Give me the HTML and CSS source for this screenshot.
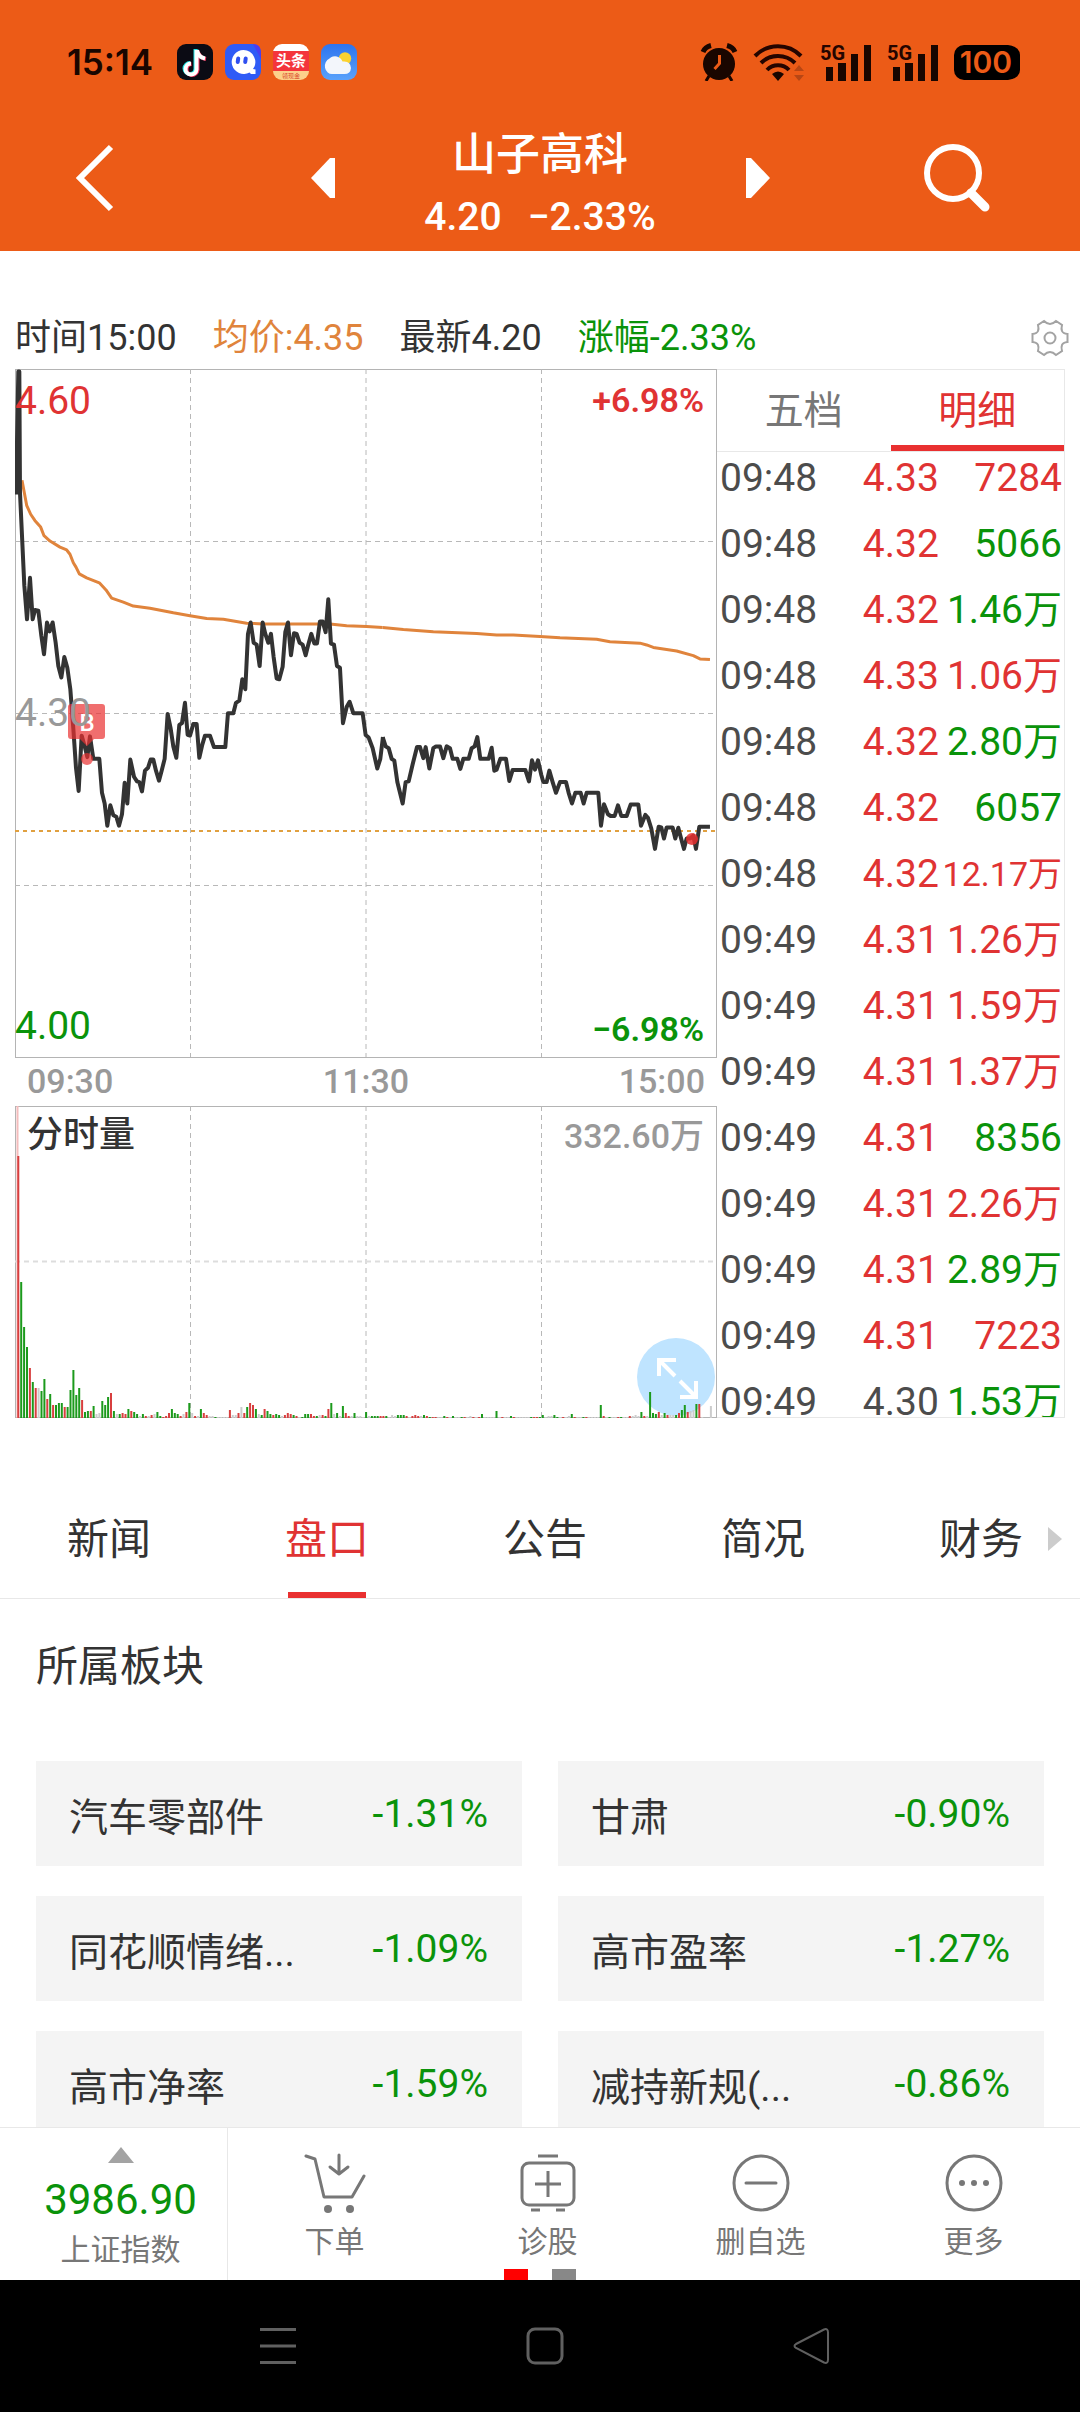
FILE: index.html
```html
<!DOCTYPE html>
<html lang="zh-CN">
<head>
<meta charset="utf-8">
<meta name="viewport" content="width=device-width, initial-scale=1">
<title>山子高科 4.20 -2.33%</title>
<link rel="stylesheet" href="styles.css">
</head>
<body>
<header class="header">
  <div class="status">
    <span class="clock">15:14</span>
    <div class="apps">
      <svg width="36" height="36" viewBox="0 0 36 36"><rect width="36" height="36" rx="9" fill="#0b0b14"/><g fill="none" stroke-width="4"><path d="M18.500 5v20a5.500 5.500 0 1 1-5.500-6M19 6q1 7 8 8" stroke="#25e6e6"/><path d="M20.500 7v19a5.500 5.500 0 1 1-6-6M20.500 7q2 7 8.500 8" stroke="#f3325c"/><path d="M19.500 6v19.500a5.500 5.500 0 1 1-5.500-6M20 6q1 7 8 8.500" stroke="#fff"/></g></svg>
      <svg width="36" height="36" viewBox="0 0 36 36"><rect width="36" height="36" rx="9" fill="#2f5bf6"/><path d="M36 15 28 0q8 0 8 9z" fill="#4b3df0"/><path d="M18.500 6a12 12 0 1 0 6 22.500l1.500 1.500h4.500v-4.500l-2.500-.5a12 12 0 0 0-9.500-19z" fill="#fff"/><rect x="11" y="12.500" width="4" height="7.500" rx="2" fill="#2f4ff0" transform="rotate(8 13 16)"/><rect x="18.500" y="12.500" width="4" height="7.500" rx="2" fill="#2f4ff0" transform="rotate(8 20 16)"/></svg>
      <span class="toutiao"><b>头条</b><i>领现金</i></span>
      <svg width="36" height="36" viewBox="0 0 36 36"><defs><linearGradient id="sky" x2="0" y2="1"><stop stop-color="#2d74ee"/><stop offset="1" stop-color="#5aa2fb"/></linearGradient></defs><rect width="36" height="36" rx="9" fill="url(#sky)"/><circle cx="24" cy="14.500" r="6.200" fill="#fbd22f"/><path d="M11.500 30a7 8 0 0 1-3-15.500 8 8 0 0 1 13 3q8-1 8.500 6.500-.5 6-6.500 6z" fill="#f3f6fb"/></svg>
    </div>
    <div class="signals">
      <svg width="38" height="38" viewBox="0 0 38 38"><circle cx="19" cy="21" r="16" fill="#190600"/><g fill="none" stroke="#190600"><path d="M3 9q2-5 8-6.500M35 9q-2-5-8-6.500" stroke-width="5"/><path d="m9 33-3 5M29 33l3 5" stroke-width="3"/></g><path d="M19.500 12v8.500l-5 5.500" fill="none" stroke="#ec5b17" stroke-width="3"/></svg>
      <svg width="52" height="38" viewBox="0 0 52 38"><g fill="none" stroke="#240500" stroke-width="4"><path d="M2 13a32 32 0 0 1 46 0"/><path d="M8 20a24 24 0 0 1 34 0"/><path d="M14 27a15 15 0 0 1 22 0"/></g><path d="M19 31q6-5 12 0l-6 7z" fill="#190600"/><path d="m46 22 5 6H41zM46 38l5-6H41z" fill="#b84614"/></svg>
      <svg width="52" height="38" viewBox="0 0 52 38"><text x="0" y="17" class="net">5G</text><path d="M6 24h7v14H6zM18 20h8v18h-8zM31 11h7v27h-7zM44 2h7v36h-7z" fill="#190600"/></svg>
      <svg width="52" height="38" viewBox="0 0 52 38"><text x="0" y="17" class="net">5G</text><path d="M6 24h7v14H6zM18 20h8v18h-8zM31 11h7v27h-7zM44 2h7v36h-7z" fill="#190600"/></svg>
      <span class="battery">100</span>
    </div>
  </div>
  <div class="titlebar">
    <button class="icon-btn back" aria-label="返回"><svg width="40" height="68" viewBox="0 0 40 68"><path d="M36 3 5 34l31 31" fill="none" stroke="#fff" stroke-width="6"/></svg></button>
    <div class="switcher">
      <button class="icon-btn" aria-label="上一只"><svg width="24" height="40" viewBox="0 0 24 40"><path d="M24 0v40h-5L0 20 19 0z" fill="#fff"/></svg></button>
      <div class="stock">
        <h1>山子高科</h1>
        <p><span>4.20</span><span>−2.33%</span></p>
      </div>
      <button class="icon-btn" aria-label="下一只"><svg width="24" height="40" viewBox="0 0 24 40"><path d="M0 0v40h5l19-20L5 0z" fill="#fff"/></svg></button>
    </div>
    <button class="icon-btn search" aria-label="搜索"><svg width="66" height="68" viewBox="0 0 66 68"><circle cx="29" cy="29" r="26" fill="none" stroke="#fff" stroke-width="6"/><path d="m47 49 14 14" stroke="#fff" stroke-width="9" stroke-linecap="round"/></svg></button>
  </div>
</header>

<main class="content">
  <div class="quote">
    <span>时间15:00</span><span class="avg">均价:4.35</span><span>最新4.20</span><span class="down">涨幅-2.33%</span>
    <button class="icon-btn gear" aria-label="设置"><svg width="38" height="38" viewBox="-1 -1 38 38"><path d="M35.500 14v8q-4.500.500-5.500 3-1 2 0 6l-6 4q-3-3-6-3t-6 3l-6-4q1-4 0-6-1-2.500-5.500-3v-8q4.500-.500 5.500-3 1-2 0-6l6-4q3 3 6 3t6-3l6 4q-1 4 0 6 1 2.500 5.500 3z" fill="none" stroke="#a3a3a3" stroke-width="2"/><circle cx="18" cy="18" r="5.500" fill="none" stroke="#a3a3a3" stroke-width="2"/></svg></button>
  </div>

  <div class="board">
    <div class="charts">
      <div class="chart">
        <svg class="plot" viewBox="0 0 702 688">
          <rect x=".5" y=".5" width="701" height="688" fill="none" stroke="#b4b4b4"/>
          <g fill="none" stroke="#b8b8b8" stroke-dasharray="5 4"><path d="M175.500 0v688M351 0v688M526.500 0v688M0 172.500h702M0 344.500h702M0 516.500h702"/></g>
          <path d="M0 462h702" stroke="#e0a040" stroke-width="2" stroke-dasharray="4 4"/>
          <g fill="none" stroke-linejoin="round">
            <g stroke="#e0843c" stroke-width="3">
              <polyline vector-effect="non-scaling-stroke" transform="translate(-15 -69) scale(.3333 .3571)" points="66,505 73,540 80,575 92,600 105,618 122,636 132,660 150,675 180,692 200,700 210,712 220,736 228,748 238,767 260,778 298,792 318,812 335,835 370,846 400,857 450,863 520,876 570,884 620,892 670,894 740,905 790,907 990,907 1040,912 1100,914 1148,917"/>
              <polyline vector-effect="non-scaling-stroke" transform="translate(365 -69) scale(.3333 .3571)" points="8,917 70,923 160,929 290,934 350,938 400,938 480,942 540,946 650,950 690,957 780,961 800,966 820,973 890,983 940,996 960,1005 990,1007"/>
            </g>
            <g stroke="#333" stroke-width="4">
              <polyline vector-effect="non-scaling-stroke" transform="translate(-15 -69) scale(.3333 .3571)" points="51,545 51,400 55,200 58,200 60,540 65,640 73,800 81,894 90,778 98,894 105,868 115,870 124,940 132,992 141,903 149,928 158,903 167,960 175,1025 184,1057 193,1000 202,1030 211,1090 220,1200 228,1310 236,1375 245,1220 254,1250 262,1280 270,1222 280,1285 298,1285 306,1380 314,1410 322,1472 331,1415 340,1443 349,1447 357,1472 366,1440 374,1352 382,1410 391,1287 402,1335 411,1348 418,1350 426,1376 435,1318 444,1310 452,1287 460,1287 468,1318 477,1346 485,1318 494,1285 503,1159 512,1200 520,1250 529,1282 538,1190 546,1185 555,1128 563,1218 570,1220 580,1187 590,1187 598,1282 607,1245 615,1220 630,1220 642,1252 676,1252 684,1157 700,1157 708,1128 718,1122 727,1062 736,1090 744,935 752,903 761,960 770,965 779,1025 788,903 796,935 805,960 813,935 821,1000 830,1060 838,1062 848,1027 856,930 864,903 873,995 882,933 890,935 899,960 908,965 917,995 925,965 934,935 943,962 951,962 960,900 968,900 977,930 985,838 993,962 1002,965 1011,1025 1020,1030 1029,1185 1040,1140 1049,1125 1060,1157 1088,1157 1097,1218 1106,1225 1118,1255 1132,1312 1141,1285 1149,1224"/>
              <polyline vector-effect="non-scaling-stroke" transform="translate(365 -69) scale(.3333 .3571)" points="8,1224 17,1250 26,1255 35,1285 43,1290 52,1350 60,1380 68,1410 77,1350 86,1348 98,1300 111,1252 120,1252 130,1283 137,1252 148,1312 160,1255 168,1250 180,1250 190,1283 200,1250 210,1255 218,1285 232,1285 241,1313 250,1285 266,1285 275,1255 284,1250 292,1224 301,1285 326,1285 335,1254 343,1318 350,1315 361,1285 378,1285 388,1347 398,1316 436,1316 447,1348 456,1289 465,1315 474,1289 484,1330 490,1350 500,1350 508,1318 518,1350 528,1380 540,1350 558,1350 566,1380 576,1410 586,1380 602,1380 611,1410 620,1380 655,1380 663,1472 672,1412 684,1440 692,1445 704,1445 714,1415 724,1445 740,1445 752,1413 775,1413 783,1472 796,1442 804,1450 814,1480 825,1537 836,1475 844,1477 852,1508 860,1477 878,1477 886,1508 895,1478 904,1510 912,1537 920,1508 930,1508 940,1500 948,1537 958,1475 990,1475"/>
            </g>
          </g>
          <g fill="#e93030" fill-opacity=".7"><path d="M56 335h31q3 0 3 3v29q0 3-3 3h-8l-7 7-7-7h-9q-3 0-3-3v-29q0-3 3-3z"/><circle cx="72" cy="390" r="6"/><circle cx="677" cy="470" r="6" fill-opacity=".85"/></g>
          <text x="72" y="362" class="buy">B</text>
        </svg>
        <span class="label top-left up">4.60</span>
        <span class="label mid-left">4.30</span>
        <span class="label bottom-left down">4.00</span>
        <span class="label pct top-right up">+6.98%</span>
        <span class="label pct bottom-right down">−6.98%</span>
      </div>
      <div class="axis"><span>09:30</span><span>11:30</span><span>15:00</span></div>
      <div class="chart volume">
        <button class="icon-btn expand" aria-label="全屏"><svg width="78" height="78" viewBox="0 0 78 78"><g fill="none" stroke="#fff" stroke-width="4"><path d="M22 38V22h17M22 22l16 16M43 59h16V43M59 59 43 43"/></g></svg></button>
        <svg class="plot" viewBox="0 0 702 312">
          <rect x=".5" y=".5" width="701" height="311" fill="none" stroke="#b4b4b4"/>
          <g fill="none" stroke="#b8b8b8" stroke-dasharray="5 4"><path d="M175.500 0v312M351 0v312M526.500 0v312"/><path d="M0 155.500h702" stroke="#ddd" stroke-width="2"/></g>
          <path d="M2.500 0v312" stroke="#f4bcbc" stroke-width="2"/>
          <path id="bars-n" stroke="#ccc"/><path id="bars-r" stroke="#d83f3f"/><path id="bars-g" stroke="#1c9a1c"/>
        </svg>
        <span class="label vol-name">分时量</span>
        <span class="label vol-max">332.60万</span>
      </div>
    </div>

    <section class="ticks">
      <div class="tick-tabs"><button>五档</button><button class="active">明细</button></div>
      <div class="tick-list">
        <table>
          <tr><td>09:48</td><td class="up">4.33</td><td class="up">7284</td></tr>
          <tr><td>09:48</td><td class="up">4.32</td><td class="down">5066</td></tr>
          <tr><td>09:48</td><td class="up">4.32</td><td class="down">1.46万</td></tr>
          <tr><td>09:48</td><td class="up">4.33</td><td class="up">1.06万</td></tr>
          <tr><td>09:48</td><td class="up">4.32</td><td class="down">2.80万</td></tr>
          <tr><td>09:48</td><td class="up">4.32</td><td class="down">6057</td></tr>
          <tr><td>09:48</td><td class="up">4.32</td><td class="up long">12.17万</td></tr>
          <tr><td>09:49</td><td class="up">4.31</td><td class="up">1.26万</td></tr>
          <tr><td>09:49</td><td class="up">4.31</td><td class="up">1.59万</td></tr>
          <tr><td>09:49</td><td class="up">4.31</td><td class="up">1.37万</td></tr>
          <tr><td>09:49</td><td class="up">4.31</td><td class="down">8356</td></tr>
          <tr><td>09:49</td><td class="up">4.31</td><td class="up">2.26万</td></tr>
          <tr><td>09:49</td><td class="up">4.31</td><td class="down">2.89万</td></tr>
          <tr><td>09:49</td><td class="up">4.31</td><td class="up">7223</td></tr>
          <tr><td>09:49</td><td>4.30</td><td class="down">1.53万</td></tr>
        </table>
      </div>
    </section>
  </div>

  <nav class="tabs">
    <button><span>新闻</span></button>
    <button class="active"><span>盘口</span></button>
    <button><span>公告</span></button>
    <button><span>简况</span></button>
    <button><span>财务</span></button>
    <svg class="more-arrow" width="14" height="24" viewBox="0 0 14 24"><path d="m0 0 14 12L0 24z" fill="#ccc"/></svg>
  </nav>

  <section class="sectors">
    <h2>所属板块</h2>
    <div class="sector-grid">
      <a href="#"><span>汽车零部件</span><span class="down">-1.31%</span></a>
      <a href="#"><span>甘肃</span><span class="down">-0.90%</span></a>
      <a href="#"><span>同花顺情绪...</span><span class="down">-1.09%</span></a>
      <a href="#"><span>高市盈率</span><span class="down">-1.27%</span></a>
      <a href="#"><span>高市净率</span><span class="down">-1.59%</span></a>
      <a href="#"><span>减持新规(...</span><span class="down">-0.86%</span></a>
    </div>
  </section>
</main>

<footer class="toolbar">
  <button class="index">
    <svg width="26" height="16" viewBox="0 0 26 16"><path d="m13 0 13 16H0z" fill="#a3a3a3"/></svg>
    <strong class="down">3986.90</strong>
    <span>上证指数</span>
  </button>
  <button class="action">
    <svg width="62" height="60" viewBox="0 0 62 60"><g fill="none" stroke="#777" stroke-width="3" stroke-linecap="round" stroke-linejoin="round"><path d="m2 3 9 3 9 38h28l12-21"/><path d="M35 2v19M26 14l9 7 9-7"/></g><circle cx="24" cy="56" r="4" fill="#777"/><circle cx="46" cy="56" r="4" fill="#777"/></svg>
    <span>下单</span>
  </button>
  <button class="action">
    <svg width="62" height="60" viewBox="0 0 62 60"><g fill="none" stroke="#777" stroke-width="3"><rect x="5" y="10" width="52" height="42" rx="7"/><path d="M21 3h20M14 57h9M39 57h9M31 18v26M18 31h26"/></g></svg>
    <span>诊股</span>
  </button>
  <button class="action">
    <svg width="62" height="60" viewBox="0 0 62 60"><circle cx="31" cy="30" r="27" fill="none" stroke="#777" stroke-width="3"/><path d="M16 30h30" stroke="#777" stroke-width="3" stroke-linecap="round"/></svg>
    <span>删自选</span>
  </button>
  <button class="action">
    <svg width="62" height="60" viewBox="0 0 62 60"><circle cx="31" cy="30" r="27" fill="none" stroke="#777" stroke-width="3"/><g fill="#777"><circle cx="19" cy="30" r="3"/><circle cx="31" cy="30" r="3"/><circle cx="43" cy="30" r="3"/></g></svg>
    <span>更多</span>
  </button>
  <div class="pager"><i class="on"></i><i></i></div>
</footer>

<nav class="sysnav">
  <button class="icon-btn" aria-label="任务"><svg width="38" height="38" viewBox="0 0 38 38"><path d="M1 2.500h36M1 19h36M1 35.500h36" stroke="#606060" stroke-width="3"/></svg></button>
  <button class="icon-btn" aria-label="主页"><svg width="38" height="38" viewBox="0 0 38 38"><rect x="2" y="2" width="34" height="34" rx="7" fill="none" stroke="#606060" stroke-width="3"/></svg></button>
  <button class="icon-btn" aria-label="后退"><svg width="38" height="38" viewBox="0 0 38 38"><path d="M3 17 31 2.500q4-1.500 4 3v27q0 4.500-4 3L3 21q-3-2 0-4z" fill="none" stroke="#606060" stroke-width="2"/></svg></button>
</nav>
<script src="chart.js"></script>
</body>
</html>
```
FILE: styles.css
```css
* { box-sizing: border-box; margin: 0; }
body {
  display: flex; flex-direction: column; height: 100vh; overflow: hidden;
  background: #fff; color: #333;
  font-family: Roboto, "Noto Sans CJK SC", sans-serif; font-size: 39px;
}
button { font: inherit; color: inherit; background: none; border: 0; padding: 0; }
svg { display: block; }
.icon-btn { display: block; }
.up { color: #e03333; }
.down { color: #0a930a; }

.header { background: #ec5b17; height: 251px; flex: none; }
.status { display: flex; align-items: center; height: 124px; padding: 0 62px 0 67px; color: #190600; }
.clock { font: 600 35px/36px Inter, sans-serif; width: 110px; white-space: nowrap; }
.apps { display: flex; gap: 12px; }
.toutiao {
  display: flex; flex-direction: column; align-items: center; justify-content: flex-end;
  width: 36px; height: 36px; border-radius: 9px; overflow: hidden;
  background: linear-gradient(#fff 7px, #f4353c 7px 27px, #fcd08a 27px); color: #fff; white-space: nowrap;
}
.toutiao b { font-size: 15px; line-height: 20px; }
.toutiao i { font: normal 6px/9px "Noto Sans CJK SC", sans-serif; color: #d8452b; }
.signals { display: flex; align-items: center; gap: 15px; margin-left: auto; }
.net { font: 700 20px Roboto, sans-serif; fill: #240500; }
.battery {
  width: 64px; height: 35px; border-radius: 10px; background: #000; color: #ec5b17;
  font: 600 30px/35px Inter, sans-serif; text-align: center;
  box-shadow: 3px 0 0 -1px #000;
}
.titlebar { display: grid; grid-template-columns: 1fr auto 1fr; align-items: center; height: 127px; color: #fff; }
.titlebar .icon-btn { padding-bottom: 20px; }
.back { justify-self: start; margin-left: 75px; }
.search { justify-self: end; margin-right: 90px; }
.switcher { display: flex; align-items: center; }
.stock { width: 411px; height: 127px; text-align: center; }
.stock h1 { font-size: 44px; line-height: 62px; font-weight: 500; }
.stock p { display: flex; justify-content: center; gap: 26px; font-size: 39px; line-height: 62px; font-weight: 500; }

.content { flex: 1; min-height: 0; overflow: hidden; }
.quote { display: flex; gap: 36px; align-items: center; height: 118px; padding: 56px 11px 0 15px; font-size: 36px; line-height: 60px; }
.quote .avg { color: #e0843c; }
.gear { margin-left: auto; }

.board { display: grid; grid-template-columns: 702fr 348fr; margin: 0 15px; }
.chart { position: relative; }
.plot { position: relative; width: 100%; height: auto; overflow: visible; }
.label { position: absolute; line-height: 40px; }
.top-left { left: 0; top: 12px; }
.mid-left { left: 0; top: 324px; color: #999; }
.bottom-left { left: 0; bottom: 11px; }
.pct { font-size: 34px; font-weight: 600; right: 13px; }
.top-right { top: 11px; }
.bottom-right { bottom: 8px; }
.buy { font: 500 24px Roboto, sans-serif; fill: #fff; text-anchor: middle; }
.axis { display: flex; justify-content: space-between; padding: 0 12px; color: #999; font-size: 34px; line-height: 49px; font-weight: 500; }
.vol-name { left: 12px; top: 9px; font-size: 36px; font-weight: 500; }
.vol-max { right: 13px; top: 10px; font-size: 34px; font-weight: 500; color: #999; }
.expand { position: absolute; right: 2px; bottom: 2px; border-radius: 50%; background: #bfe4ff; }

.ticks { display: flex; flex-direction: column; min-height: 0; border: 1px solid #e8e8e8; border-left: 0; color: #4c4c4c; contain: size; }
.tick-tabs { display: flex; flex: none; border-bottom: 1px solid #e8e8e8; }
.tick-tabs button { flex: 1; height: 81px; line-height: 75px; padding-top: 4px; border-bottom: 6px solid transparent; color: #777; }
.tick-tabs .active { color: #e03333; border-color: #e93030; }
.tick-list { flex: 1; min-height: 0; overflow: hidden; padding: 0 2px 0 3px; }
table { width: 100%; border-collapse: collapse; table-layout: fixed; }
td { height: 66px; padding: 0 0 14px; line-height: 52px; text-align: right; vertical-align: top; white-space: nowrap; }
td:first-child { text-align: left; width: 28%; }
td:nth-child(2) { width: 36%; }
.long { font-size: 34px; }

.tabs { position: relative; display: flex; overflow: hidden; margin-top: 63px; border-bottom: 1px solid #e8e8e8; font-size: 42px; }
.tabs button { flex: 1 0 218px; display: flex; justify-content: center; }
.tabs button span { height: 117px; line-height: 117px; }
.tabs .active { color: #e03333; }
.tabs .active span { background: linear-gradient(#e93030, #e93030) center bottom / 78px 6px no-repeat; }
.more-arrow { position: absolute; right: 18px; top: 46px; }

.sectors { padding: 38px 36px 0; }
h2 { font-size: 42px; line-height: 60px; font-weight: 400; }
.sector-grid { display: grid; grid-template-columns: 1fr 1fr; gap: 30px 36px; margin-top: 64px; }
.sector-grid a {
  display: flex; justify-content: space-between; align-items: center; height: 105px; padding: 0 34px 0 33px;
  background: #f4f4f4; color: #333; text-decoration: none; white-space: nowrap;
}
.sector-grid .down { color: #0a930a; }

.toolbar { position: relative; display: flex; flex: none; height: 153px; border-top: 1px solid #e8e8e8; background: #fff; color: #777; font-size: 30px; line-height: 40px; }
.index { display: flex; flex-direction: column; align-items: center; width: 228px; padding: 19px 0 0 14px; border-right: 1px solid #e8e8e8; }
.index strong { font-size: 42px; line-height: 50px; font-weight: 400; margin: 12px 0 5px; }
.action { flex: 1; display: flex; flex-direction: column; align-items: center; padding-top: 25px; gap: 9px; }
.pager { position: absolute; bottom: 0; left: 0; right: 0; display: flex; justify-content: center; gap: 24px; }
.pager i { width: 24px; height: 11px; background: #888; }
.pager .on { background: #f00; }

.sysnav { display: flex; flex: none; justify-content: space-around; align-items: center; height: 132px; padding: 0 134px 0 144px; background: #000; }
```
FILE: chart.js
```js
// One entry per minute: direction (g down, r up, n flat) and bar height.
const volumes = `r262 g136 g91 g71 r50 g36 r30 n30 g27 g39 r19 g24 r13 g13 g15 g15 r11 g11 g28 g48
g23 g30 r18 g6 g7 r7 g12 n4 n5 g17 g13 g21 r25 g7 n4 g4 r5 r4 g9 r7
g6 g4 n2 g4 r2 n2 r3 n4 g6 g2 r1 r2 r5 g9 g5 g4 r2 n4 r6 g15
n5 r2 n2 g9 r5 r3 n2 n2 g1 n1 n1 n1 n1 r8 n3 n3 r5 n11 r5 g11
r15 r13 g9 n4 g3 r9 g7 g4 r3 g4 g3 n2 r3 r5 r4 g3 r2 n1 g1 g4
g4 r4 r2 g2 n3 r3 g2 r9 g15 n4 g5 n2 g12 r5 r2 n2 g5 n2 n2 n1
g6 n2 g2 g2 g2 r2 r2 g2 n1 n3 n2 g3 g3 g3 r2 n1 r2 r3 r2 n2
g3 r2 g1 r1 r1 n1 n1 g2 r1 n1 g2 n1 n1 g1 r1 n1 n2 r1 n1 r1
g4 n1 n1 n1 n1 g7 n1 r1 n1 n1 g2 r1 n1 n1 n1 n1 n1 g1 r1 r1
g1 g3 n1 n2 n2 g3 g1 n1 r1 n1 n2 g4 r1 n1 n1 g1 r1 n1 n1 n1
n1 g13 r2 n1 g1 n1 n1 r1 g1 n1 n1 r2 n2 n3 n2 g6 r2 n2 g26 g5
g4 r6 n3 g5 r3 n3 n3 g3 r5 g8 g13 r6 n7 n8 g14 r14 n1 n0 n0 n12`.split(/\s+/);

const paths = { g: "", r: "", n: "" };
volumes.forEach((v, i) => {
  paths[v[0]] += `M${(3.3 + i * 2.898).toFixed(1)} 312v-${v.slice(1)}`;
});
for (const key in paths) {
  const el = document.getElementById("bars-" + key);
  el.setAttribute("d", paths[key]);
  el.setAttribute("stroke-width", "2");
}
```
